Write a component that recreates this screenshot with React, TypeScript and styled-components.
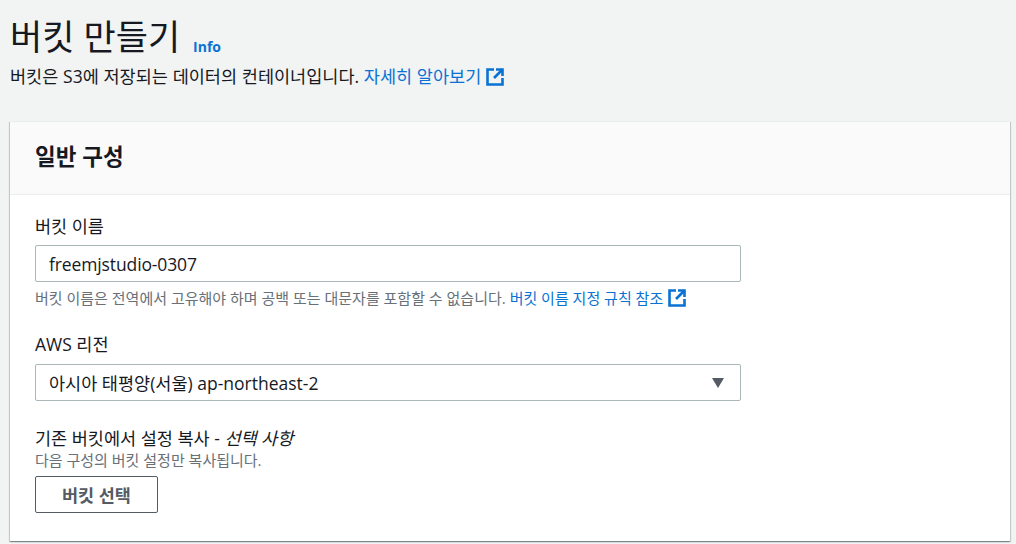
import styled, { createGlobalStyle } from 'styled-components';

const linkColor = '#0972d3';

const GlobalStyle = createGlobalStyle`
	html, body {
		margin: 0;
		padding: 0;
		background: #f2f3f3;
		overflow: hidden;
	}
	body {
		font-family: "Open Sans", "Noto Sans CJK KR", sans-serif;
		color: #16191f;
	}
`;

const Page = styled.div`
	width: 1016px;
	height: 544px;
	padding: 11px 6px 0 10px;
	box-sizing: border-box;
	overflow: hidden;
`;

const Heading = styled.div`
	display: flex;
	align-items: flex-end;
	gap: 13px;
	height: 52px;
`;

const Title = styled.h1`
	margin: 0;
	font-size: 35px;
	line-height: 52px;
	font-weight: 400;
`;

const InfoLink = styled.a`
	font-size: 14px;
	line-height: 20px;
	font-weight: 700;
	color: ${linkColor};
	margin-bottom: 6px;
`;

const Description = styled.p`
	margin: 0;
	padding-top: 1px;
	font-size: 17.5px;
	line-height: 24px;
	height: 57px;
	word-spacing: 0.2px;
`;

const TextLink = styled.a`
	color: ${linkColor};
`;

const IconSvg = styled.svg`
	display: inline-block;
	vertical-align: -3px;
	margin-left: 5px;
`;

const ExternalIcon = () => (
	<IconSvg width={18} height={18} viewBox="0 0 18 18" fill="none" stroke={linkColor} strokeWidth="2.6">
		<path d="M8 1.5H1.5v15h15V10" />
		<path d="M10 1.5h6.5V8" />
		<path d="M16.5 1.5L8 10" />
	</IconSvg>
);

const Card = styled.section`
	width: 1000px;
	height: 420px;
	background: #fff;
	box-shadow: 0 1px 1px 0 rgba(0, 28, 36, 0.3), 1px 1px 1px 0 rgba(0, 28, 36, 0.15),
		-1px 1px 1px 0 rgba(0, 28, 36, 0.15);
	border-top: 1px solid #eaeded;
	box-sizing: border-box;
`;

const CardHeader = styled.header`
	height: 73px;
	padding: 15px 25px 0;
	box-sizing: border-box;
	background: #fafafa;
	border-bottom: 1px solid #eaeded;
`;

const CardTitle = styled.h2`
	margin: 0;
	font-size: 22.5px;
	line-height: 40px;
	font-weight: 700;
`;

const CardBody = styled.div`
	display: flex;
	flex-direction: column;
	padding: 20px 25px 0;
`;

const Field = styled.div<{ $height: number }>`
	display: flex;
	flex-direction: column;
	height: ${(props) => props.$height}px;
`;

const Label = styled.label`
	font-size: 17.5px;
	line-height: 24px;
	height: 30px;
	margin-top: -1px;
	margin-bottom: 1px;
`;

const RegionLabel = styled(Label)`
	margin-top: -2px;
	margin-bottom: 2px;
`;

const CompactLabel = styled(Label)`
	height: 22px;
	margin-top: 4px;
	margin-bottom: 0;
`;

const Optional = styled.i`
	font-style: italic;
`;

const TextInput = styled.div`
	display: flex;
	align-items: center;
	justify-content: space-between;
	width: 706px;
	height: 37px;
	padding: 0 16px 0 13px;
	box-sizing: border-box;
	background: #fff;
	border: 1px solid #aab7b8;
	border-radius: 2px;
	font-size: 17.5px;
`;

const NameInput = styled(TextInput)`
	letter-spacing: -0.12px;
`;

const Caret = styled.span`
	width: 0;
	height: 0;
	border-left: 6.5px solid transparent;
	border-right: 6.5px solid transparent;
	border-top: 10px solid #545b64;
`;

const Hint = styled.div`
	font-size: 15px;
	line-height: 20px;
	color: #687078;
	padding-top: 6px;
`;

const CompactHint = styled(Hint)`
	padding-top: 2px;
	height: 26px;
`;

const OutlineButton = styled.button`
	width: 123px;
	height: 37px;
	padding: 0;
	background: #fff;
	border: 1px solid #545b64;
	border-radius: 2px;
	color: #545b64;
	font-family: inherit;
	font-size: 17.5px;
	font-weight: 700;
`;

const App = () => (
	<>
		<GlobalStyle />
		<Page>
			<Heading>
				<Title>버킷 만들기</Title>
				<InfoLink>Info</InfoLink>
			</Heading>
			<Description>
				버킷은 S3에 저장되는 데이터의 컨테이너입니다. <TextLink>자세히 알아보기</TextLink>
				<ExternalIcon />
			</Description>
			<Card>
				<CardHeader>
					<CardTitle>일반 구성</CardTitle>
				</CardHeader>
				<CardBody>
					<Field $height={119}>
						<Label>버킷 이름</Label>
						<NameInput>freemjstudio-0307</NameInput>
						<Hint>
							버킷 이름은 전역에서 고유해야 하며 공백 또는 대문자를 포함할 수 없습니다.{' '}
							<TextLink>버킷 이름 지정 규칙 참조</TextLink>
							<ExternalIcon />
						</Hint>
					</Field>
					<Field $height={88}>
						<RegionLabel>AWS 리전</RegionLabel>
						<TextInput>
							아시아 태평양(서울) ap-northeast-2
							<Caret />
						</TextInput>
					</Field>
					<Field $height={100}>
						<CompactLabel>
							기존 버킷에서 설정 복사 - <Optional>선택 사항</Optional>
						</CompactLabel>
						<CompactHint>다음 구성의 버킷 설정만 복사됩니다.</CompactHint>
						<OutlineButton>버킷 선택</OutlineButton>
					</Field>
				</CardBody>
			</Card>
		</Page>
	</>
);

export default App;
